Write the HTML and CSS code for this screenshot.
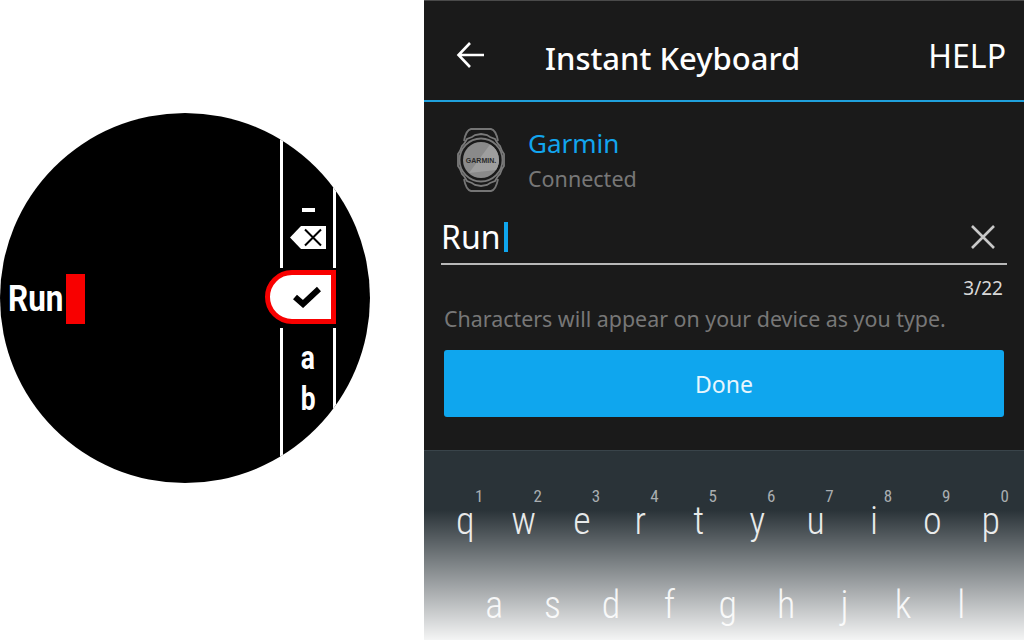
FILE: index.html
```html
<!DOCTYPE html>
<html lang="en">
<head>
    <meta charset="UTF-8">
    <title>Instant Keyboard</title>
    <link rel="stylesheet" href="styles.css">
</head>
<body>
    <!-- watch face -->
    <div class="watch-side">
        <div class="watch-face">
            <div class="entry">
                <span class="entry-text">Run</span>
                <span class="entry-cursor"></span>
            </div>
            <div class="strip">
                <div class="strip-top">
                    <span class="dash"></span>
                    <svg class="backspace" width="36" height="23" viewBox="0 0 36 23">
                        <path d="M0 11.5L11 0H36V23H11Z" fill="#fff"/>
                        <path d="M15 3.5L31 19.5M31 3.5L15 19.5" stroke="#000" stroke-width="2" fill="none"/>
                    </svg>
                </div>
                <div class="strip-selected">
                    <svg width="28" height="22" viewBox="0 0 28 22">
                        <path d="M2 11L10 18L26 3" stroke="#000" stroke-width="6" fill="none"/>
                    </svg>
                </div>
                <div class="strip-bottom">
                    <span class="strip-letter">a</span>
                    <span class="strip-letter">b</span>
                </div>
            </div>
        </div>
    </div>

    <!-- phone app -->
    <div class="phone">
        <div class="app-header">
            <svg class="back" width="30" height="28" viewBox="0 0 30 28">
                <path d="M28 14H3M14 2L2.5 14L14 26" stroke="#fff" stroke-width="2.6" fill="none"/>
            </svg>
            <h1 class="app-title">Instant Keyboard</h1>
            <span class="help">HELP</span>
        </div>

        <div class="device">
            <svg class="device-icon" width="54" height="66" viewBox="0 0 54 66">
                <path d="M10 14Q12 3 17 2H37Q42 3 44 14M10 52Q12 63 17 64H37Q42 63 44 52" stroke="#757575" stroke-width="1.8" fill="#1a1a1a"/>
                <path d="M27 7L33 8L36 10L41 12L44 17L46 19L48 24L50 27V39L48 42L46 47L44 49L41 54L36 56L33 58L27 59L21 58L18 56L13 54L10 49L8 47L6 42L4 39V27L6 24L8 19L10 17L13 12L18 10L21 8Z" fill="#1a1a1a" stroke="#7a7a7a" stroke-width="1.8"/>
                <circle cx="27" cy="33" r="21.5" fill="none" stroke="#7a7a7a" stroke-width="1.8"/>
                <circle cx="27" cy="33" r="18" fill="#8a8a8a"/>
                <path d="M36 17.5A18 18 0 0 1 42 43L15 46Z" fill="#9e9e9e"/>
                <text class="device-logo" x="27" y="35.5" text-anchor="middle">GARMIN.</text>
            </svg>
            <div class="device-info">
                <div class="device-name">Garmin</div>
                <div class="device-status">Connected</div>
            </div>
        </div>

        <div class="field">
            <div class="field-value">Run<span class="caret"></span></div>
            <svg width="26" height="26" viewBox="0 0 26 26">
                <path d="M2 2L24 24M24 2L2 24" stroke="#c8c8c8" stroke-width="2.6" fill="none"/>
            </svg>
        </div>
        <div class="counter">3/22</div>
        <p class="hint">Characters will appear on your device as you type.</p>
        <button class="done">Done</button>

        <div class="keyboard">
            <div class="key-row">
                <span class="key"><sup>1</sup>q</span>
                <span class="key"><sup>2</sup>w</span>
                <span class="key"><sup>3</sup>e</span>
                <span class="key"><sup>4</sup>r</span>
                <span class="key"><sup>5</sup>t</span>
                <span class="key"><sup>6</sup>y</span>
                <span class="key"><sup>7</sup>u</span>
                <span class="key"><sup>8</sup>i</span>
                <span class="key"><sup>9</sup>o</span>
                <span class="key"><sup>0</sup>p</span>
            </div>
            <div class="key-row key-row-home">
                <span class="key">a</span>
                <span class="key">s</span>
                <span class="key">d</span>
                <span class="key">f</span>
                <span class="key">g</span>
                <span class="key">h</span>
                <span class="key">j</span>
                <span class="key">k</span>
                <span class="key">l</span>
            </div>
        </div>
    </div>
</body>
</html>
```

FILE: styles.css
```css
html, body {
    height: 100%;
}
body {
    margin: 0;
    display: flex;
    background-color: white;
    font-family: "Noto Sans", sans-serif;
    overflow: hidden;
}

/* watch */
.watch-side {
    width: 424px;
    padding-top: 113px;
    box-sizing: border-box;
}
.watch-face {
    width: 370px;
    height: 370px;
    border-radius: 50%;
    background-color: black;
    overflow: hidden;
    display: flex;
    align-items: center;
}
.entry {
    display: flex;
    align-items: center;
    padding-left: 8px;
    width: 280px;
    box-sizing: border-box;
    margin-top: 2px;
}
.entry-text {
    color: white;
    font-family: "Roboto", sans-serif;
    font-weight: 700;
    font-size: 37px;
    line-height: 50px;
    width: 58px;
    transform: scaleX(0.85);
    transform-origin: left center;
}
.entry-cursor {
    width: 19px;
    height: 50px;
    background-color: #f80000;
}
.strip {
    width: 56px;
    height: 100%;
    display: flex;
    flex-direction: column;
}
.strip-top,
.strip-bottom {
    flex: 1;
    display: flex;
    flex-direction: column;
    align-items: center;
    border-left: 3px solid white;
    border-right: 3px solid white;
}
.strip-top {
    justify-content: flex-end;
    margin-bottom: 2px;
}
.strip-bottom {
    margin-top: 4px;
}
.dash {
    width: 13px;
    height: 4px;
    background-color: white;
    margin-bottom: 14px;
}
.backspace {
    margin-bottom: 19px;
}
.strip-selected {
    height: 54px;
    margin-left: -15px;
    box-sizing: border-box;
    border: 5px solid #f80000;
    border-radius: 27px 0 0 27px;
    background-color: white;
    display: flex;
    align-items: center;
    justify-content: center;
    padding-left: 12px;
}
.strip-letter {
    color: white;
    font-family: "Roboto", sans-serif;
    font-weight: 700;
    font-size: 33px;
    line-height: 41px;
    transform: scaleX(0.8);
}
.strip-letter:first-child {
    margin-top: 9px;
}

/* phone */
.phone {
    flex: 1;
    display: flex;
    flex-direction: column;
    background-color: #1a1a1a;
    border-top: 1px solid #4a4a4a;
}
.app-header {
    flex-shrink: 0;
    height: 99px;
    border-bottom: 2px solid #1fa0dc;
    display: flex;
    align-items: center;
    padding: 0 18px 0 32px;
    color: white;
}
.back {
    margin-top: 8px;
}
.app-title {
    margin: 14px 0 0 59px;
    font-size: 31px;
    font-weight: 500;
    flex: 1;
}
.help {
    font-size: 32px;
    margin-top: 10px;
}
.device {
    display: flex;
    align-items: center;
    padding: 23px 0 0 30px;
}
.device-logo {
    font-family: "Liberation Sans", sans-serif;
    font-size: 7px;
    font-weight: 700;
    fill: #2a2a2a;
}
.device-info {
    margin-left: 20px;
}
.device-name {
    color: #12a5ee;
    font-size: 26px;
    line-height: 36px;
}
.device-status {
    color: #777;
    font-size: 21.5px;
    line-height: 32px;
    margin-top: 2px;
}
.field {
    flex-shrink: 0;
    margin: 15px 17px 0;
    height: 53px;
    border-bottom: 2px solid #b8b8b8;
    display: flex;
    align-items: center;
    justify-content: space-between;
    padding-right: 11px;
}
.field-value {
    color: white;
    font-size: 32px;
    display: flex;
    align-items: center;
}
.caret {
    width: 4px;
    height: 30px;
    background-color: #0fa6ee;
    margin-left: 4px;
}
.counter {
    color: #d8d8d8;
    font-size: 19px;
    text-align: right;
    line-height: 26px;
    padding-right: 21px;
    margin-top: 10px;
}
.hint {
    margin: 3px 0 0 20px;
    color: #777;
    font-size: 21.4px;
    line-height: 30px;
}
.done {
    flex-shrink: 0;
    margin: 16px 20px 0;
    height: 67px;
    border: none;
    border-radius: 3px;
    background-color: #0fa6ee;
    color: #e8f6fd;
    font-family: "Noto Sans", sans-serif;
    font-size: 23px;
}
.keyboard {
    margin-top: 33px;
    flex: 1;
    background-color: #2a3338;
    border-top: 1px solid #39444a;
    padding: 40px 4px 0 12px;
    position: relative;
}
.keyboard::after {
    content: "";
    position: absolute;
    left: 0;
    right: 0;
    top: 59px;
    bottom: 0;
    background: linear-gradient(rgba(255, 255, 255, 0), white 92%);
}
.key-row {
    display: flex;
    height: 84px;
}
.key-row-home {
    padding-left: 29px;
}
.key {
    width: 58.4px;
    text-align: center;
    position: relative;
    color: #e6e8e8;
    font-family: "Roboto", sans-serif;
    font-stretch: 85%;
    font-weight: 350;
    font-size: 38px;
    line-height: 60px;
}
.key sup {
    position: absolute;
    top: -5px;
    right: 11px;
    color: #a9aeb1;
    font-size: 17px;
    font-weight: 400;
    line-height: 20px;
}
```
